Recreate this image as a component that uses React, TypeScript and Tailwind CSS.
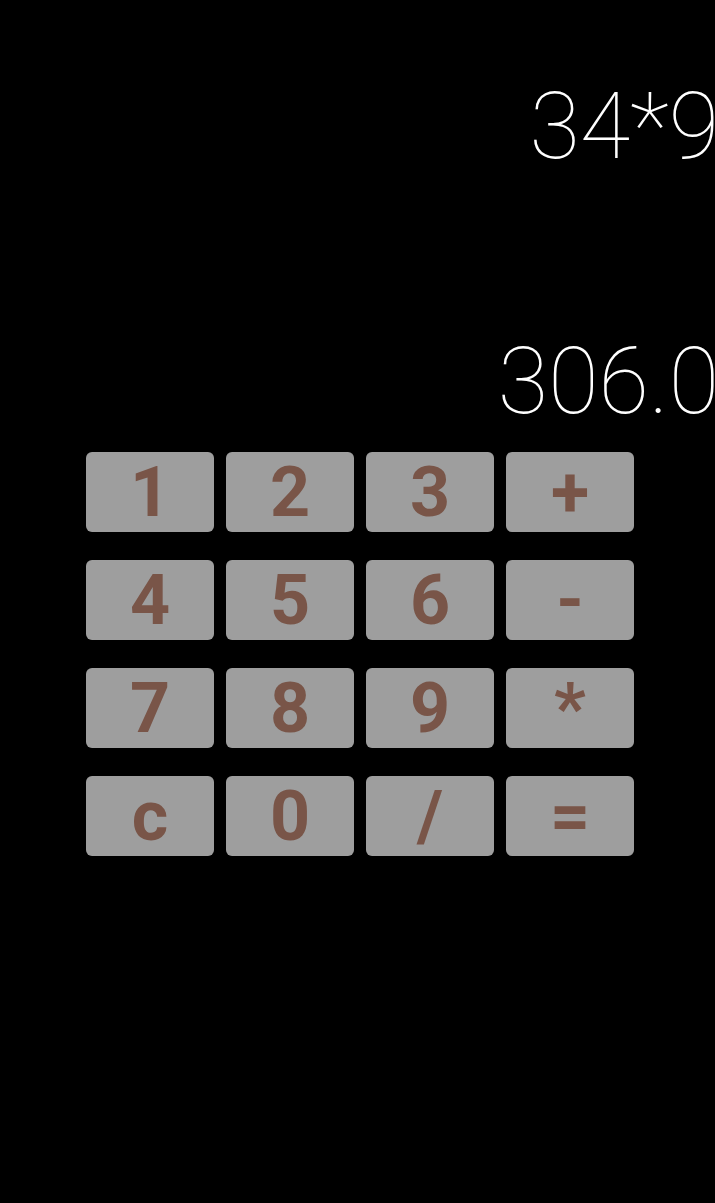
import React from 'react';

const keys = ['1', '2', '3', '+', '4', '5', '6', '-', '7', '8', '9', '*', 'c', '0', '/', '='];

export default function App() {
    return (
        <div className="h-[1203px] w-full overflow-hidden bg-black font-['Roboto',sans-serif]">
            <div className="-mr-[4px] pt-[81px] text-right">
                <div className="text-[92px] font-thin leading-none text-white">34*9</div>
                <div className="mt-[163px] text-[92px] font-thin leading-none text-white">306.0</div>
            </div>
            <div className="ml-[86px] mt-[24px] grid w-[548px] grid-cols-4 gap-x-[12px] gap-y-[28px]">
                {keys.map(k => (
                    <button
                        key={k}
                        type="button"
                        className="flex h-[80px] items-center justify-center rounded-[6px] bg-[#9e9e9e] text-[70px] font-bold leading-none text-[#795548]"
                    >
                        {k}
                    </button>
                ))}
            </div>
        </div>
    );
}
